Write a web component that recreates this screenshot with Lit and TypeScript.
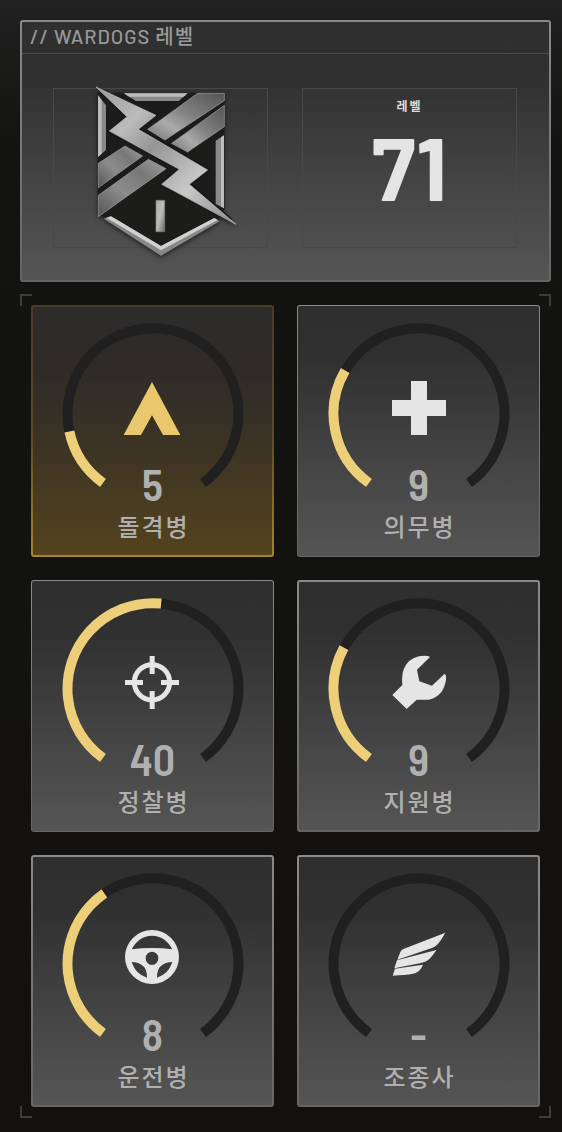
import { LitElement, html, css, svg, nothing } from "lit";
import { customElement, property, state } from "lit/decorators.js";
import { classMap } from "lit/directives/class-map.js";

type IconName = "assault" | "medic" | "recon" | "support" | "driver" | "pilot";

interface Role {
  icon: IconName;
  name: string;
  level: string;
  progress: number;
  edge: "thin" | "thick";
}

const ROLES: Role[] = [
  { icon: "assault", name: "돌격병", level: "5", progress: 14.6, edge: "thick" },
  { icon: "medic", name: "의무병", level: "9", progress: 29.3, edge: "thin" },
  { icon: "recon", name: "정찰병", level: "40", progress: 51.9, edge: "thin" },
  { icon: "support", name: "지원병", level: "9", progress: 28.7, edge: "thick" },
  { icon: "driver", name: "운전병", level: "8", progress: 38, edge: "thick" },
  { icon: "pilot", name: "조종사", level: "-", progress: 0, edge: "thick" },
];

/* Icons share the dial's coordinates at three units per pixel. */
const ICONS = {
  assault: svg`<path d="M270 177 L355 336 H303 L270 277 L237 336 H185 Z"/>`,
  medic: svg`<path d="M249 174 H297 V231 H354 V279 H297 V336 H249 V279 H192 V231 H249 Z"/>`,
  recon: svg`
    <circle cx="270" cy="253" r="53" fill="none" stroke="currentColor" stroke-width="15"/>
    <path d="M263 174 H278 V228 H263 Z M263 279 H278 V333 H263 Z M189 246 H243 V261 H189 Z M297 246 H351 V261 H297 Z"/>`,
  support: svg`<path d="M306 177 L267 215 L274 250 L312 263 L349 228 Q356 228 354 246 Q346 296 302 305 H266 L236 333 L193 291 L223 261 Q219 222 234 200 Q256 170 300 174 Z"/>`,
  driver: svg`<path fill-rule="evenodd" d="M270 171 A81 81 0 1 0 270 333 A81 81 0 1 0 270 171 Z
    M270 188 Q310 189 331 229 Q300 225 270 225 Q240 225 209 229 Q230 189 270 188 Z
    M270 236 A19 20 0 1 1 270 276 A19 20 0 1 1 270 236 Z
    M209 267 Q230 267 243 279 Q255 288 255 314 Q221 304 209 267 Z
    M331 267 Q310 267 297 279 Q285 288 285 314 Q319 304 331 267 Z"/>`,
  pilot: svg`<path d="M352 179 C340 199 330 218 314 224 L208 260 L217 237 Q220 230 228 227 Z
    M325 231 C312 252 300 266 279 270 L199 286 L207 262 Z
    M285 275 Q276 300 252 303 Q235 306 194 308 L201 287 Z"/>`,
};

@customElement("role-dial")
export class RoleDial extends LitElement {
  @property() icon: IconName = "assault";
  @property({ type: Number }) progress = 0;

  static styles = css`
    :host { display: block; }
    .dial { display: block; width: 182px; height: 182px; }
    .arc { fill: none; stroke-width: 10; }
    .track { stroke: #202020; }
    .value { stroke: #edcf79; }
    .icon { fill: currentColor; }
  `;

  render() {
    const arc = "M41 160 A85.5 85.5 0 1 1 141 160";
    return html`
      <svg class="dial" viewBox="0 0 182 182" aria-hidden="true">
        <path class="arc track" d=${arc}></path>
        ${this.progress > 0
          ? svg`<path class="arc value" d=${arc} pathLength="100" stroke-dasharray="${this.progress} 200"></path>`
          : nothing}
        <g class="icon" transform="scale(0.33333)">${ICONS[this.icon]}</g>
      </svg>
    `;
  }
}

@customElement("rank-emblem")
export class RankEmblem extends LitElement {
  static styles = css`
    :host { display: block; }
    .emblem { display: block; width: 170px; height: 190px; filter: drop-shadow(0 2px 2px #0008); }
  `;

  render() {
    return html`
      <svg class="emblem" viewBox="-15 -9 510 570" role="img" aria-label="I">
        <defs>
          <linearGradient id="bar" x1="0" y1="1" x2="1" y2="0">
            <stop offset="0" stop-color="#777"/><stop offset=".3" stop-color="#aaa"/>
            <stop offset=".55" stop-color="#808080"/><stop offset="1" stop-color="#555"/>
          </linearGradient>
          <linearGradient id="bar2" x1="0" y1="1" x2="1" y2="0">
            <stop offset="0" stop-color="#555"/><stop offset=".4" stop-color="#8c8c8c"/>
            <stop offset=".7" stop-color="#787878"/><stop offset="1" stop-color="#a0a0a0"/>
          </linearGradient>
          <linearGradient id="bolt" x1="0" y1="0" x2="1" y2="1">
            <stop offset="0" stop-color="#999"/><stop offset=".25" stop-color="#bbb"/>
            <stop offset=".42" stop-color="#959595"/><stop offset=".7" stop-color="#c8c8c8"/>
            <stop offset="1" stop-color="#888"/>
          </linearGradient>
          <linearGradient id="pin" x1="0" y1="0" x2="1" y2="1">
            <stop offset="0" stop-color="#aaa"/><stop offset=".5" stop-color="#bdbdb8"/><stop offset="1" stop-color="#666"/>
          </linearGradient>
        </defs>
        <path fill="#1c1c1b" d="M50 50 H430 V398 L412 430 L240 532 L75 425 L50 415 Z"/>
        <path fill="#898989" d="M128 52 H320 L293 75 H165 Z M51 58 L75 88 V222 L51 243 Z M429 178 L404 194 V384 L429 397 Z"/>
        <path fill="#bcbcbc" d="M128 52 H320 L308 62 H145 Z M51 58 L62 72 V233 L51 243 Z M429 178 L420 184 V391 L429 397 Z"/>
        <path fill="#888" d="M68 428 L90 421 L240 510 L400 426 L416 436 L240 539 Z"/>
        <path fill="#d0d0d0" d="M76 425 L90 421 L240 510 L400 426 L410 432 L240 523 Z"/>
        <g stroke="#181818" stroke-width="12" stroke-linejoin="round" fill="#181818">
          <path d="M355 60 H422 V72 L252 186 L206 160 Z M422 98 V150 L320 222 L279 202 Z M60 264 L132 216 L178 240 L60 326 Z M60 364 L200 256 L248 278 L60 410 Z"/>
          <path d="M64 50 L225 118 L172 160 L380 282 L325 325 L446 430 L242 325 L295 280 L85 165 L138 122 Z"/>
        </g>
        <g stroke="#a2a2a2" stroke-width="2">
          <path fill="url(#bar)" d="M350 52 H430 V74 L252 192 L200 160 Z"/>
          <path fill="url(#bar)" d="M430 88 V152 L320 228 L272 202 Z"/>
          <path fill="url(#bar2)" d="M52 262 L132 210 L185 240 L52 335 Z"/>
          <path fill="url(#bar2)" d="M52 358 L202 250 L255 278 L52 422 Z"/>
          <path fill="url(#bolt)" stroke="#bbb" d="M45 33 L225 118 L172 160 L380 282 L325 325 L465 445 L242 325 L295 280 L85 165 L138 122 Z"/>
        </g>
        <path fill="url(#pin)" stroke="#888" stroke-width="2" d="M225 373 H251 V467 H225 Z"/>
      </svg>
    `;
  }
}

@customElement("app-root")
export class AppRoot extends LitElement {
  @state() private selected: IconName = "assault";

  static styles = css`
    :host {
      display: block;
      box-sizing: border-box;
      min-height: 100vh;
      padding: 20px 11px 14px 20px;
      background: linear-gradient(#212121, #131311 150px, #12110f);
      color: #b0b0b0;
      font-family: Barlow, Roboto, "Noto Sans CJK KR", sans-serif;
    }
    .panel {
      border: 2px solid transparent;
      border-radius: 3px;
      background:
        linear-gradient(#2f2f2f, #303030 20%, #424242 58%, #555) padding-box,
        linear-gradient(#8a8a8a, #777 50%, #656565) border-box;
    }
    .title {
      margin: 0;
      padding: 0 8px 2px;
      border-bottom: 1px solid #4b4b4b;
      color: #999;
      font-size: 20px;
      font-weight: 500;
      line-height: 29px;
      letter-spacing: 1px;
    }
    .summary {
      display: grid;
      grid-template-columns: 1fr 1fr;
      gap: 34px;
      padding: 34px 32px 32px 31px;
    }
    .cell {
      display: flex;
      flex-direction: column;
      align-items: center;
      box-sizing: border-box;
      height: 160px;
      border: 1px solid #484848;
    }
    .crest { margin: -16px 0; }
    .caption {
      margin-top: 9px;
      color: #dedede;
      font-size: 12px;
      font-weight: 700;
      line-height: 16px;
      letter-spacing: 2px;
    }
    .total {
      margin-top: 6px;
      color: #e4e4e4;
      font-size: 88px;
      font-weight: 700;
      line-height: 92px;
    }
    .frame {
      position: relative;
      margin-top: 12px;
      padding: 11px;
    }
    .corner {
      position: absolute;
      width: 10px;
      height: 10px;
      border: 0 solid #3c3c3a;
    }
    .tl { top: 0; left: 0; border-width: 2px 0 0 2px; }
    .tr { top: 0; right: 0; border-width: 2px 2px 0 0; }
    .bl { bottom: 0; left: 0; border-width: 0 0 2px 2px; }
    .br { bottom: 0; right: 0; border-width: 0 2px 2px 0; }
    .roles {
      display: grid;
      grid-template-columns: 1fr 1fr;
      gap: 23px;
    }
    .role {
      display: flex;
      flex-direction: column;
      align-items: center;
      padding: 16px 0 12px;
      color: #b0b0b0;
      font-family: inherit;
      cursor: pointer;
    }
    .thin {
      padding: 17px 1px 13px;
      border-width: 1px;
    }
    .selected {
      background:
        linear-gradient(#2d2c2c, #2e2b28 25%, #3b3324 55%, #54431e) padding-box,
        linear-gradient(#493d24, #5c4a20 50%, #a98429) border-box;
    }
    .gauge { display: grid; justify-items: center; }
    .gauge > * { grid-area: 1 / 1; }
    .glyph { color: #e5e5e5; }
    .selected .glyph { color: #eac66c; }
    .level {
      align-self: end;
      font-family: "Barlow Semi Condensed", Barlow, Roboto, sans-serif;
      font-size: 44px;
      font-weight: 600;
      line-height: 43px;
    }
    .name {
      margin-top: 6px;
      padding-left: 2px;
      font-size: 24px;
      font-weight: 500;
      line-height: 32px;
      letter-spacing: 2px;
    }
  `;

  render() {
    return html`
      <section class="panel">
        <h1 class="title">// WARDOGS 레벨</h1>
        <div class="summary">
          <div class="cell"><rank-emblem class="crest"></rank-emblem></div>
          <div class="cell">
            <span class="caption">레벨</span>
            <span class="total">71</span>
          </div>
        </div>
      </section>
      <section class="frame">
        <i class="corner tl"></i><i class="corner tr"></i>
        <i class="corner bl"></i><i class="corner br"></i>
        <div class="roles">
          ${ROLES.map((role) => {
            const on = role.icon === this.selected;
            return html`
              <button
                type="button"
                class=${classMap({ panel: true, role: true, thin: role.edge === "thin", selected: on })}
                aria-pressed=${on}
                @click=${() => (this.selected = role.icon)}
              >
                <span class="gauge">
                  <role-dial class="glyph" .icon=${role.icon} .progress=${role.progress}></role-dial>
                  <span class="level">${role.level}</span>
                </span>
                <span class="name">${role.name}</span>
              </button>
            `;
          })}
        </div>
      </section>
    `;
  }
}
